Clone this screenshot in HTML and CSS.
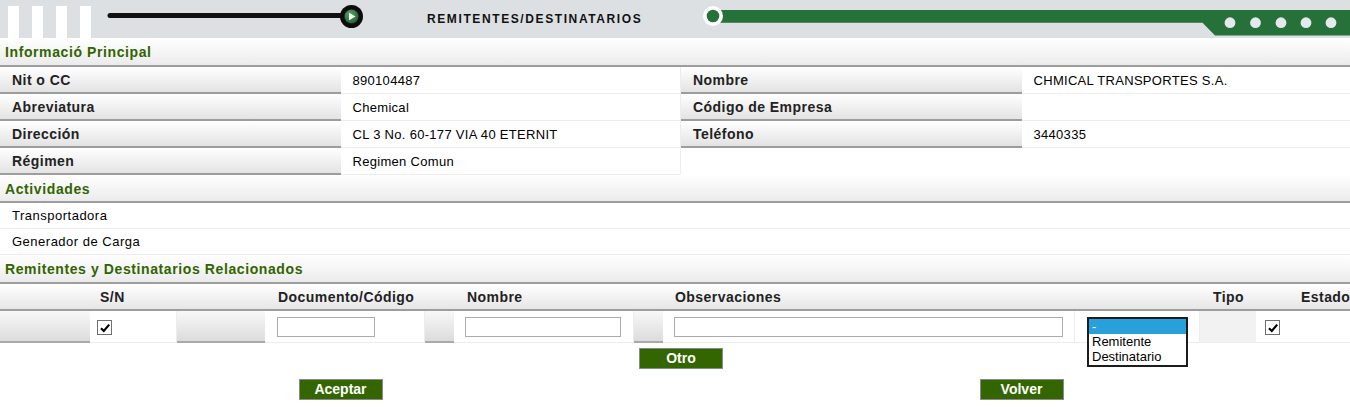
FILE: index.html
```html
<!DOCTYPE html>
<html lang="es">
<head>
<meta charset="utf-8">
<title>Remitentes/Destinatarios</title>
<link rel="stylesheet" href="styles.css">
</head>
<body>
<div class="page">
  <header class="banner">
    <div class="bars"><span></span><span></span><span></span><span></span></div>
    <svg class="slider" width="279" height="38" viewBox="0 0 279 38">
      <defs>
        <radialGradient id="kn" cx="0.4" cy="0.35" r="0.7">
          <stop offset="0" stop-color="#5aa36c"/>
          <stop offset="1" stop-color="#1f5f30"/>
        </radialGradient>
      </defs>
      <line x1="19" y1="15.5" x2="252" y2="15.5" stroke="#111" stroke-width="5" stroke-linecap="round"/>
      <circle cx="260.5" cy="16.5" r="11.5" fill="#0d0d0d"/>
      <circle cx="260.5" cy="16.5" r="7" fill="url(#kn)"/>
      <polygon points="258,12.8 258,20.2 264.5,16.5" fill="#fff"/>
    </svg>
    <h1 class="title">REMITENTES/DESTINATARIOS</h1>
    <svg class="track" width="662" height="38" viewBox="0 0 662 38">
      <path d="M20 10 H662 V35.5 H515 L502.5 22.7 H20 Z" fill="#26703a"/>
      <circle cx="13" cy="16" r="10" fill="#fff"/>
      <circle cx="13" cy="16" r="6.3" fill="#26703a"/>
      <circle cx="530" cy="22.7" r="5.4" fill="#e6e9ec"/>
      <circle cx="555.5" cy="22.7" r="5.4" fill="#e6e9ec"/>
      <circle cx="581" cy="22.7" r="5.4" fill="#e6e9ec"/>
      <circle cx="606" cy="22.7" r="5.4" fill="#e6e9ec"/>
      <circle cx="631" cy="22.7" r="5.4" fill="#e6e9ec"/>
    </svg>
  </header>

  <div class="sec">Informació Principal</div>
  <div class="info">
    <div class="lbl">Nit o CC</div><div class="val">890104487</div>
    <div class="lbl">Nombre</div><div class="val">CHMICAL TRANSPORTES S.A.</div>
    <div class="lbl">Abreviatura</div><div class="val">Chemical</div>
    <div class="lbl">Código de Empresa</div><div class="val"></div>
    <div class="lbl">Dirección</div><div class="val">CL 3 No. 60-177 VIA 40 ETERNIT</div>
    <div class="lbl">Teléfono</div><div class="val">3440335</div>
    <div class="lbl">Régimen</div><div class="val">Regimen Comun</div>
  </div>

  <div class="sec sec-short">Actividades</div>
  <div class="act">Transportadora</div>
  <div class="act">Generador de Carga</div>

  <div class="sec">Remitentes y Destinatarios Relacionados</div>
  <div class="cols thead">
    <div></div>
    <div class="th p10">S/N</div>
    <div></div>
    <div class="th p13">Documento/Código</div>
    <div></div>
    <div class="th p13">Nombre</div>
    <div></div>
    <div class="th p12">Observaciones</div>
    <div></div>
    <div class="th p13">Tipo</div>
    <div class="th p45">Estado</div>
  </div>
  <div class="cols drow">
    <div class="g"></div>
    <div class="w"><span class="chk chk-sn"><svg width="12" height="12" viewBox="0 0 12 12"><path d="M2 6.2 L4.8 9 L10.2 2.6" fill="none" stroke="#000" stroke-width="2.2"/></svg></span></div>
    <div class="g"></div>
    <div class="w"><input class="txt t-doc" type="text"></div>
    <div class="g"></div>
    <div class="w"><input class="txt t-nom" type="text"></div>
    <div class="g"></div>
    <div class="w"><input class="txt t-obs" type="text"></div>
    <div class="w">
      <div class="list">
        <div class="opt sel">-</div>
        <div class="opt">Remitente</div>
        <div class="opt">Destinatario</div>
      </div>
    </div>
    <div class="flat"></div>
    <div class="w"><span class="chk chk-es"><svg width="12" height="12" viewBox="0 0 12 12"><path d="M2 6.2 L4.8 9 L10.2 2.6" fill="none" stroke="#000" stroke-width="2.2"/></svg></span></div>
  </div>

  <div class="more"><button class="btn" type="button">Otro</button></div>
  <div class="actions">
    <button class="btn" type="button">Aceptar</button>
    <button class="btn" type="button">Volver</button>
  </div>
</div>
</body>
</html>
```
FILE: styles.css
```css
body {
  margin: 0;
  overflow: hidden;
  background: #fff;
  font-family: "Liberation Sans", Arial, sans-serif;
  color: #000;
}

.page {
  width: 1362px;
}

/* banner */
.banner {
  display: flex;
  height: 38px;
  background: #dde0e3;
}

.bars {
  display: flex;
  align-items: flex-end;
  gap: 13px;
  margin-left: 8px;
}

.bars span {
  width: 11px;
  height: 32px;
  background: #fff;
}

.slider,
.track {
  display: block;
  flex: none;
}

.title {
  margin: 0;
  width: 330px;
  flex: none;
  box-sizing: border-box;
  padding-left: 57px;
  font-size: 12px;
  font-weight: bold;
  letter-spacing: 1.6px;
  line-height: 38px;
  color: #111;
  white-space: nowrap;
}

/* section headers */
.sec {
  height: 29px;
  box-sizing: border-box;
  padding-left: 5px;
  border-bottom: 2px solid #9d9d9d;
  background: linear-gradient(#ffffff, #ebebeb);
  color: #326400;
  font-size: 14px;
  font-weight: bold;
  letter-spacing: 0.6px;
  line-height: 29px;
  white-space: nowrap;
}

.sec-short {
  height: 28px;
  line-height: 28px;
}

/* info grid */
.info {
  display: grid;
  grid-template-columns: repeat(4, 1fr);
  grid-auto-rows: 27px;
}

.lbl {
  box-sizing: border-box;
  padding-left: 12px;
  background: linear-gradient(#ffffff, #e3e3e3);
  border-bottom: 2px solid #9d9d9d;
  color: #222;
  font-size: 14px;
  font-weight: bold;
  letter-spacing: 0.45px;
  line-height: 27px;
  white-space: nowrap;
}

.val {
  box-sizing: border-box;
  padding-left: 12px;
  border-bottom: 1px solid #ededed;
  border-right: 1px solid #ededed;
  font-size: 13px;
  letter-spacing: 0.3px;
  line-height: 27px;
  white-space: nowrap;
}

/* activities */
.act {
  height: 26px;
  box-sizing: border-box;
  padding-left: 12px;
  border-bottom: 1px solid #ededed;
  font-size: 13px;
  letter-spacing: 0.5px;
  line-height: 26px;
}

/* related table */
.cols {
  display: grid;
  grid-template-columns: 90px 87px 88px 160px 29px 180px 29px 412px 125px 56px 106px;
}

.thead {
  height: 27px;
  box-sizing: border-box;
  background: linear-gradient(#ffffff, #e6e6e6);
  border-bottom: 2px solid #9d9d9d;
}

.th {
  color: #222;
  font-size: 14px;
  font-weight: bold;
  letter-spacing: 0.45px;
  line-height: 27px;
  white-space: nowrap;
}

.p10 { padding-left: 10px; }
.p12 { padding-left: 12px; }
.p13 { padding-left: 13px; }
.p45 { padding-left: 45px; }

.drow {
  grid-template-rows: 32px;
}

.drow > div {
  box-sizing: border-box;
  min-width: 0;
}

.g {
  background: linear-gradient(#f8f8f8, #dcdcdc);
  border-bottom: 2px solid #a9a9a9;
}

.w {
  border-bottom: 1px solid #ededed;
  border-right: 1px solid #ededed;
}

.flat {
  background: #f2f2f2;
  border-bottom: 1px solid #ededed;
}

.chk {
  display: flex;
  align-items: center;
  justify-content: center;
  width: 15px;
  height: 15px;
  box-sizing: border-box;
  margin-top: 9px;
  border: 1px solid #6f6f6f;
  background: #fff;
}

.chk-sn { margin-left: 7px; }
.chk-es { margin-left: 9px; }

.txt {
  display: block;
  height: 20px;
  box-sizing: border-box;
  margin-top: 6px;
  padding: 0 2px;
  border: 1px solid #ababab;
  background: #fff;
  font: 13px "Liberation Sans", Arial, sans-serif;
}

.t-doc { margin-left: 12px; width: 98px; }
.t-nom { margin-left: 11px; width: 156px; }
.t-obs { margin-left: 11px; width: 389px; }

.list {
  position: relative;
  z-index: 1;
  width: 101px;
  height: 50px;
  box-sizing: border-box;
  margin: 6px 0 0 12px;
  border: 2px solid #1c1c1c;
  background: #fff;
  font-size: 13px;
  line-height: 15px;
}

.opt {
  padding-left: 3px;
  height: 15px;
  white-space: nowrap;
}

.opt.sel {
  background: #29a0da;
  color: #fff;
}

/* buttons */
.btn {
  width: 84px;
  height: 21px;
  box-sizing: border-box;
  padding: 0;
  background: #336600;
  border: 1px solid #8a8a8a;
  color: #fff;
  font: bold 14px "Liberation Sans", Arial, sans-serif;
  line-height: 19px;
}

.more {
  display: flex;
  justify-content: center;
  margin-top: 5px;
}

.actions {
  display: grid;
  grid-template-columns: 1fr 1fr;
  justify-items: center;
  margin-top: 10px;
}
```
